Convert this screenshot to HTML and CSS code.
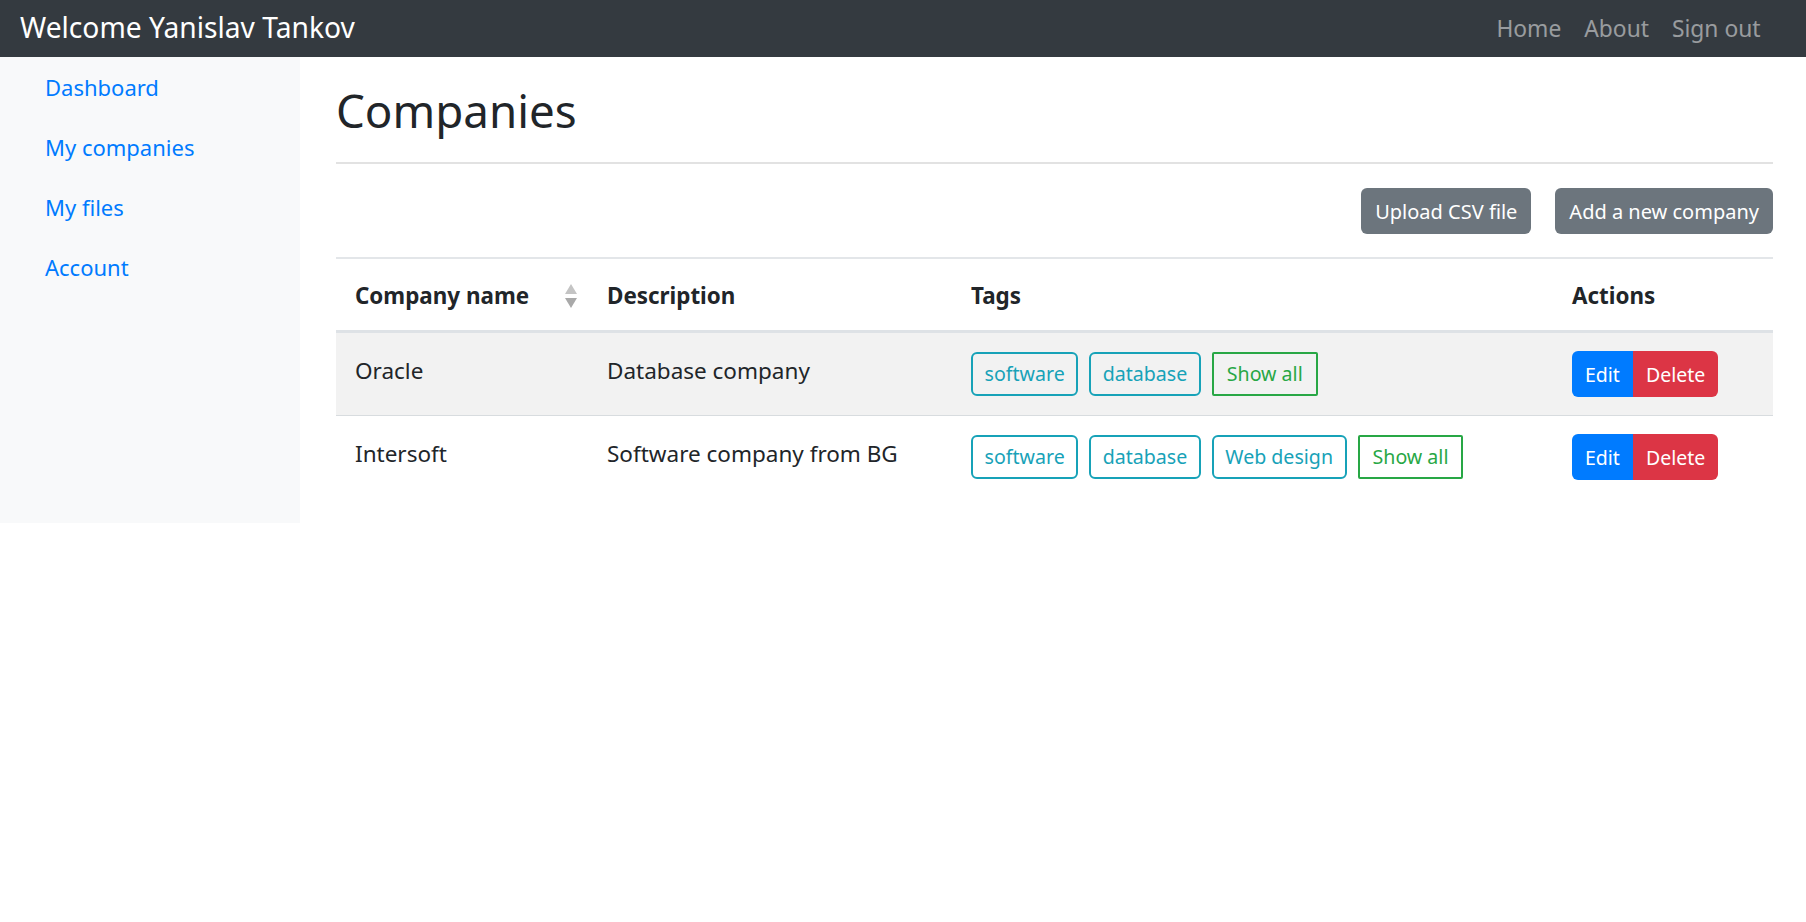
FILE: index.html
```html
<!DOCTYPE html>
<html lang="en">
<head>
<meta charset="utf-8">
<title>Companies</title>
<link rel="stylesheet" href="styles.css">
</head>
<body>
<header class="navbar">
  <a class="brand" href="#">Welcome Yanislav Tankov</a>
  <nav class="topnav">
    <a href="#">Home</a>
    <a href="#">About</a>
    <a href="#">Sign out</a>
  </nav>
</header>
<div class="layout">
  <aside class="sidebar">
    <a href="#">Dashboard</a>
    <a href="#">My companies</a>
    <a href="#">My files</a>
    <a href="#">Account</a>
  </aside>
  <main class="main">
    <h1 class="title">Companies</h1>
    <hr class="rule">
    <div class="toolbar">
      <button class="btn btn-secondary">Upload CSV file</button>
      <button class="btn btn-secondary">Add a new company</button>
    </div>
    <table class="table">
      <thead>
        <tr>
          <th class="c-name"><div class="sortable"><span>Company name</span>
            <svg class="sort" width="14" height="24" viewBox="0 0 14 24"><polygon points="7,0 13,10 1,10" fill="#c4c4c4"/><polygon points="1,14 13,14 7,24" fill="#a9a9a9"/></svg></div></th>
          <th class="c-desc">Description</th>
          <th class="c-tags">Tags</th>
          <th class="c-act">Actions</th>
        </tr>
      </thead>
      <tbody>
        <tr class="striped">
          <td class="text">Oracle</td>
          <td class="text">Database company</td>
          <td><div class="tags"><span class="tag">software</span><span class="tag">database</span><span class="tag tag-all">Show all</span></div></td>
          <td><div class="btn-group"><button class="gbtn edit">Edit</button><button class="gbtn delete">Delete</button></div></td>
        </tr>
        <tr>
          <td class="text">Intersoft</td>
          <td class="text">Software company from BG</td>
          <td><div class="tags"><span class="tag">software</span><span class="tag">database</span><span class="tag">Web design</span><span class="tag tag-all">Show all</span></div></td>
          <td><div class="btn-group"><button class="gbtn edit">Edit</button><button class="gbtn delete">Delete</button></div></td>
        </tr>
      </tbody>
    </table>
  </main>
</div>
</body>
</html>
```
FILE: styles.css
```css
* { box-sizing: border-box; }
html, body { margin: 0; padding: 0; }
body {
  font-family: "Noto Sans", "Open Sans", sans-serif;
  font-size: 22.5px;
  color: #212529;
  background: #fff;
}
a { text-decoration: none; }

.navbar {
  height: 57px;
  background: #343a40;
  display: flex;
  justify-content: space-between;
  align-items: flex-start;
  padding: 9px 34px 0 20px;
}
.brand {
  color: #fff;
  font-size: 28.2px;
  line-height: 37px;
}
.topnav { display: flex; padding-top: 1px; }
.topnav a {
  color: rgba(255,255,255,.5);
  font-size: 22.8px;
  line-height: 37px;
  padding: 0 11.5px;
}

.layout { display: flex; align-items: stretch; }
.sidebar {
  width: 300px;
  flex: 0 0 300px;
  background: #f8f9fa;
  padding-top: 0;
  display: flex;
  flex-direction: column;
}
.sidebar a {
  color: #007bff;
  font-size: 22px;
  line-height: 34px;
  padding: 13px 0 13px 45px;
}

.main {
  flex: 1;
  padding: 25px 33px 25px 36px;
}
.title {
  margin: 0;
  font-size: 45.7px;
  font-weight: 400;
  line-height: 56px;
}
.rule {
  margin: 24px 0 0;
  border: 0;
  height: 2px;
  background: #e2e2e2;
}
.toolbar {
  display: flex;
  justify-content: flex-end;
  gap: 24px;
  margin-top: 24px;
}
.btn {
  font-family: inherit;
  height: 46px;
  border: 0;
  border-radius: 6px;
  padding: 0 14px;
  font-size: 20px;
  color: #fff;
}
.btn-secondary { background: #6c757d; }

.table {
  width: 100%;
  margin-top: 23px;
  border-collapse: separate;
  border-spacing: 0;
  table-layout: fixed;
}
.c-name { width: 252px; }
.c-desc { width: 364px; }
.c-act { width: 220px; }
.table th {
  text-align: left;
  font-size: 22.4px;
  font-weight: 700;
  line-height: 32px;
  padding: 21px 19px 18px;
  border-top: 2px solid #e3e6e9;
  border-bottom: 3px solid #dee2e6;
  vertical-align: middle;
}
.sortable {
  display: flex;
  justify-content: space-between;
  align-items: center;
  margin-right: -9px;
}
.sort { display: block; }
.table td {
  padding: 18px 19px 18px;
  vertical-align: top;
}
.table td.text { line-height: 37px; padding-top: 19px; }
.table tbody tr + tr td { border-top: 1px solid #d8dcdf; }
.striped td { background: #f2f2f2; }

.tags {
  display: flex;
  align-items: center;
  gap: 11px;
  height: 46px;
}
.tag {
  display: inline-block;
  height: 44px;
  line-height: 40px;
  padding: 0 11.5px;
  border: 2px solid #17a2b8;
  border-radius: 6px;
  color: #17a2b8;
  font-size: 19.6px;
  white-space: nowrap;
}
.tag-all {
  border-color: #28a745;
  color: #28a745;
  border-radius: 2px;
  padding: 0 13px;
}

.btn-group { display: flex; }
.gbtn {
  font-family: inherit;
  height: 46px;
  border: 0;
  padding: 0 13px;
  font-size: 19.5px;
  color: #fff;
}
.edit { background: #007bff; border-radius: 6px 0 0 6px; }
.delete { background: #dc3545; border-radius: 0 6px 6px 0; }
```
